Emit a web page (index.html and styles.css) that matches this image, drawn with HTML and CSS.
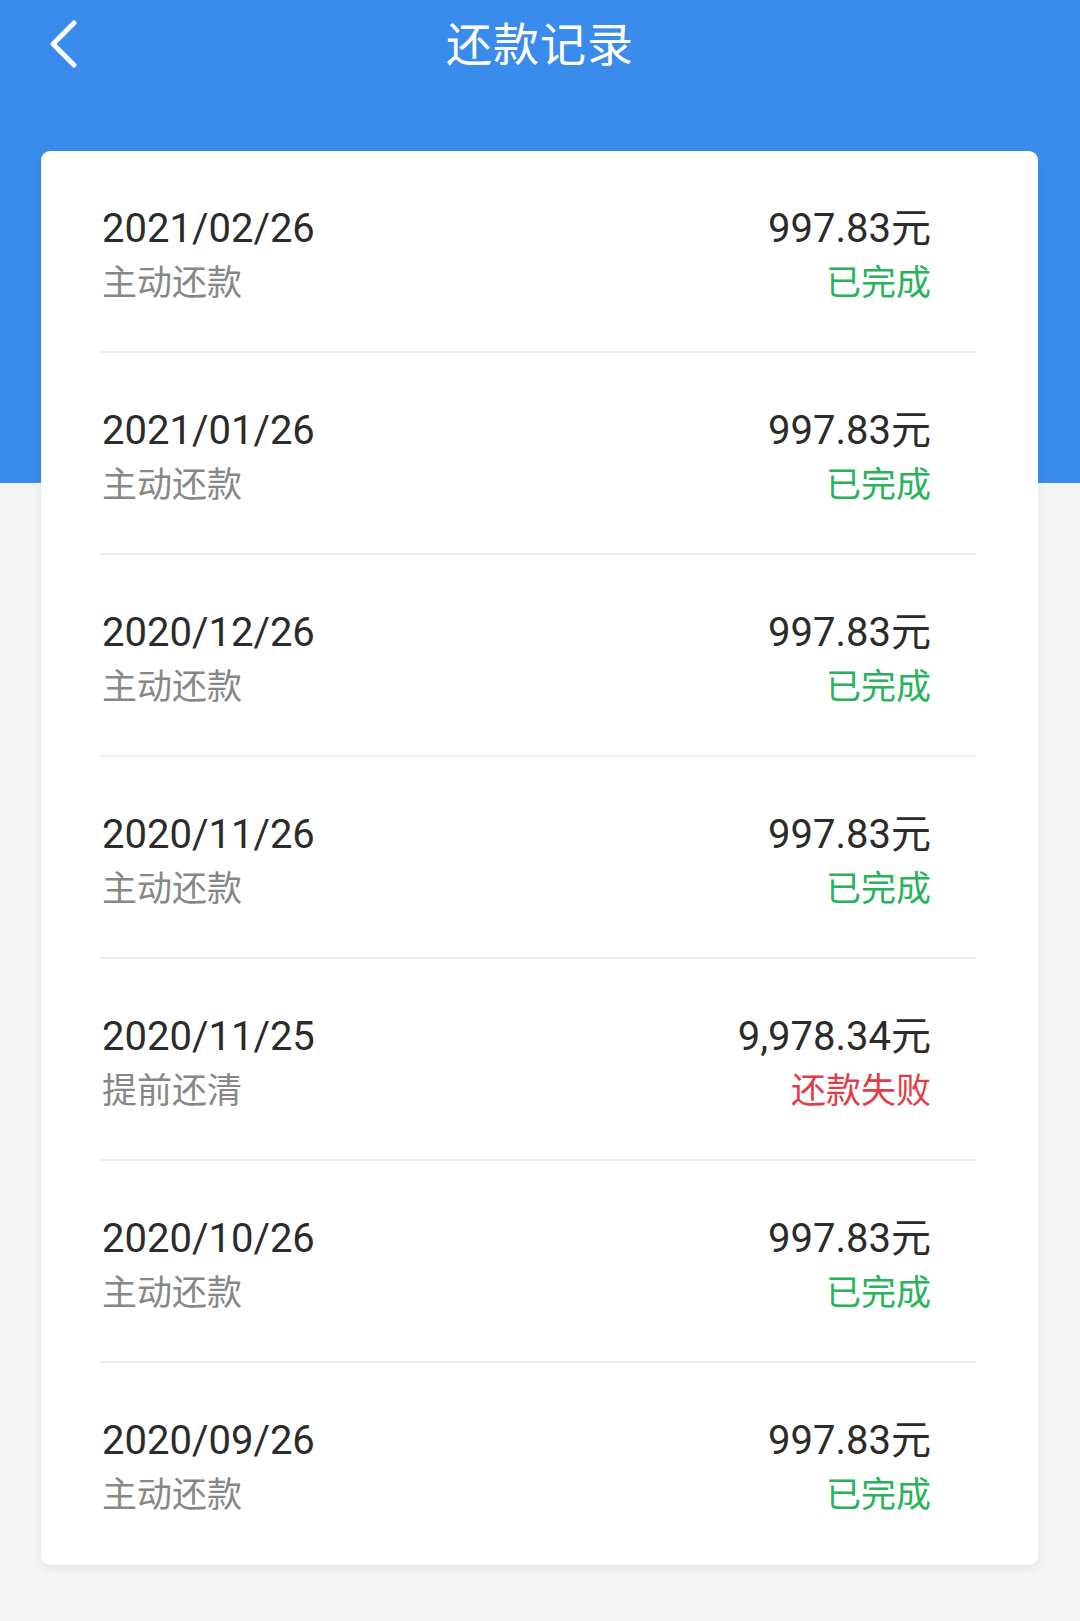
FILE: index.html
```html
<!DOCTYPE html>
<html lang="zh-CN">
<head>
<meta charset="utf-8">
<title>还款记录</title>
<link rel="stylesheet" href="styles.css">
</head>
<body>
<div class="page">
  <header class="topbar">
    <a class="back" href="#" aria-label="返回">
      <svg width="40" height="52" viewBox="0 0 40 52"><polyline points="30,6 9,27 30,48" fill="none" stroke="#ffffff" stroke-width="5" stroke-linecap="round" stroke-linejoin="round"/></svg>
    </a>
    <h1 class="title">还款记录</h1>
  </header>
  <main class="card">
    <div class="row"><div class="left"><div class="date">2021/02/26</div><div class="type">主动还款</div></div><div class="right"><div class="amount">997.83元</div><div class="status ok">已完成</div></div></div>
    <div class="row"><div class="left"><div class="date">2021/01/26</div><div class="type">主动还款</div></div><div class="right"><div class="amount">997.83元</div><div class="status ok">已完成</div></div></div>
    <div class="row"><div class="left"><div class="date">2020/12/26</div><div class="type">主动还款</div></div><div class="right"><div class="amount">997.83元</div><div class="status ok">已完成</div></div></div>
    <div class="row"><div class="left"><div class="date">2020/11/26</div><div class="type">主动还款</div></div><div class="right"><div class="amount">997.83元</div><div class="status ok">已完成</div></div></div>
    <div class="row"><div class="left"><div class="date">2020/11/25</div><div class="type">提前还清</div></div><div class="right"><div class="amount">9,978.34元</div><div class="status fail">还款失败</div></div></div>
    <div class="row"><div class="left"><div class="date">2020/10/26</div><div class="type">主动还款</div></div><div class="right"><div class="amount">997.83元</div><div class="status ok">已完成</div></div></div>
    <div class="row"><div class="left"><div class="date">2020/09/26</div><div class="type">主动还款</div></div><div class="right"><div class="amount">997.83元</div><div class="status ok">已完成</div></div></div>
  </main>
</div>
</body>
</html>
```

FILE: styles.css
```css
html, body {
  margin: 0;
  padding: 0;
}
body {
  height: 1621px;
  overflow: hidden;
  background: linear-gradient(to bottom, #3a8cec 0, #3a8cec 483px, #f4f5f4 483px, #f4f5f4 100%);
  font-family: Roboto, "Noto Sans CJK SC", sans-serif;
}
.page {
  display: flex;
  flex-direction: column;
}
.topbar {
  height: 151px;
  position: relative;
  display: flex;
  justify-content: center;
}
.back {
  position: absolute;
  left: 44px;
  top: 17px;
  display: block;
  line-height: 0;
}
.title {
  margin: 0;
  padding-top: 13px;
  height: 56px;
  line-height: 56px;
  font-size: 46px;
  font-weight: 400;
  color: #ffffff;
  font-family: "Noto Sans CJK SC", sans-serif;
  letter-spacing: 1px;
}
.card {
  margin-left: 41px;
  width: 997px;
  background: #ffffff;
  border-radius: 9px;
  box-shadow: 0 4px 10px rgba(0, 0, 0, 0.07);
  display: flex;
  flex-direction: column;
}
.row {
  box-sizing: border-box;
  height: 202px;
  margin: 0 62px 0 59px;
  padding: 54px 45px 0 2px;
  border-bottom: 2px solid #eeeeee;
  display: flex;
  justify-content: space-between;
}
.row:last-child {
  border-bottom-color: transparent;
}
.left, .right {
  display: flex;
  flex-direction: column;
}
.right {
  align-items: flex-end;
}
.date, .amount {
  font-family: Roboto, "Noto Sans CJK SC", sans-serif;
  font-size: 40px;
  line-height: 48px;
  color: #2b2b2b;
}
.type, .status {
  font-family: "Noto Sans CJK SC", sans-serif;
  font-size: 35px;
  line-height: 54px;
}
.type {
  color: #878787;
}
.status.ok {
  color: #27b35a;
}
.status.fail {
  color: #e23c48;
}
```
